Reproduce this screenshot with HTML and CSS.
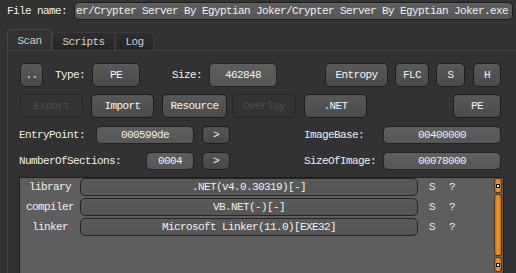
FILE: index.html
```html
<!DOCTYPE html>
<html>
<head>
<meta charset="utf-8">
<link rel="stylesheet" href="styles.css">
</head>
<body>
<div class="file-row">
  <span class="file-label">File name:</span>
  <div class="file-field"><span class="file-text">er/Crypter Server By Egyptian Joker/Crypter Server By Egyptian Joker.exe</span></div>
</div>
<div class="tabs">
  <div class="tab active w-scan">Scan</div>
  <div class="tab w-scripts">Scripts</div>
  <div class="tab w-log">Log</div>
</div>
<div class="pane">
  <div class="row r1">
    <div class="btn w-dots">..</div>
    <span class="lbl l-type">Type:</span>
    <div class="btn w-pe">PE</div>
    <span class="lbl l-size">Size:</span>
    <div class="field w-size">462848</div>
    <div class="btn w-entropy">Entropy</div>
    <div class="btn w-flc">FLC</div>
    <div class="btn w-s">S</div>
    <div class="btn w-h">H</div>
  </div>
  <div class="row r2">
    <div class="btn disabled w-export">Export</div>
    <div class="btn w-import">Import</div>
    <div class="btn w-resource">Resource</div>
    <div class="btn disabled w-overlay">Overlay</div>
    <div class="btn w-net">.NET</div>
    <div class="btn w-pe2">PE</div>
  </div>
  <div class="row r3">
    <span class="lbl l-ep">EntryPoint:</span>
    <div class="field w-ep">000599de</div>
    <div class="btn small w-arrow">&gt;</div>
    <span class="lbl l-right">ImageBase:</span>
    <div class="field w-right">00400000</div>
  </div>
  <div class="row r3">
    <span class="lbl l-nos">NumberOfSections:</span>
    <div class="field w-nos">0004</div>
    <div class="btn small w-arrow">&gt;</div>
    <span class="lbl l-right">SizeOfImage:</span>
    <div class="field w-right">00078000</div>
  </div>
  <div class="list">
    <div class="list-rows">
      <div class="lrow">
        <span class="ltype">library</span>
        <div class="lval">.NET(v4.0.30319)[-]</div>
        <span class="lflag">S</span>
        <span class="lq">?</span>
      </div>
      <div class="lrow">
        <span class="ltype">compiler</span>
        <div class="lval">VB.NET(-)[-]</div>
        <span class="lflag">S</span>
        <span class="lq">?</span>
      </div>
      <div class="lrow">
        <span class="ltype">linker</span>
        <div class="lval">Microsoft Linker(11.0)[EXE32]</div>
        <span class="lflag">S</span>
        <span class="lq">?</span>
      </div>
    </div>
    <div class="scrollbar">
      <div class="sb-btn"><span class="sb-dot"></span></div>
      <div class="sb-thumb"></div>
      <div class="sb-btn"><span class="sb-dot"></span></div>
    </div>
  </div>
</div>
</body>
</html>
```
FILE: styles.css
```css
* { box-sizing: border-box; }
html, body {
  margin: 0;
  padding: 0;
}
body {
  width: 516px;
  height: 273px;
  overflow: hidden;
  background: #323232;
  color: #f0f0f0;
  font-family: "Liberation Mono", "DejaVu Sans Mono", monospace;
  font-size: 11px;
  letter-spacing: -0.6px;
}

.file-row {
  display: flex;
  align-items: center;
  height: 18px;
  margin-top: 2px;
  padding-left: 7px;
  padding-right: 3px;
}
.file-label { width: 67px; white-space: nowrap; }
.file-field {
  flex: 1;
  height: 18px;
  border: 1px solid #1c1c1c;
  background: linear-gradient(#5f5f5f, #555555);
  border-radius: 5px;
  display: flex;
  justify-content: flex-end;
  align-items: center;
  overflow: hidden;
  padding-right: 4px;
}
.file-text { white-space: nowrap; flex: none; }

.tabs {
  display: flex;
  align-items: flex-end;
  margin-top: 9px;
  margin-left: 7px;
  height: 21px;
}
.tab {
  height: 18px;
  border: 1px solid #3b3b3b;
  border-bottom: none;
  background: linear-gradient(#2f2f2f, #242424);
  display: flex;
  align-items: center;
  justify-content: center;
  color: #d0d0d0;
}
.tab.active {
  height: 21px;
  background: #333333;
  border-color: #474747;
  border-top-left-radius: 4px;
  border-top-right-radius: 4px;
  padding-top: 2px;
}
.w-scan { width: 45px; }
.w-scripts { width: 63px; }
.w-log { width: 39px; }

.pane {
  margin-left: 7px;
  height: 223px;
  border-top: 1px solid #434343;
  border-left: 1px solid #434343;
  padding: 12px 0 0 12px;
}

.row { display: flex; align-items: center; }
.r1 { height: 24px; }
.r2 { height: 24px; margin-top: 7px; }
.r3 { height: 18px; margin-top: 8px; margin-left: -1px; }

.btn {
  height: 24px;
  border: 1px solid #1e1e1e;
  border-radius: 5px;
  background: linear-gradient(#595959, #4a4a4a);
  display: flex;
  align-items: center;
  justify-content: center;
  white-space: nowrap;
  color: #f4f4f4;
  flex: none;
}
.btn.small { height: 18px; background: linear-gradient(#545454, #474747); }
.btn.disabled {
  background: #333333;
  border-color: #262626;
  color: #4d4d4d;
}
.field {
  height: 18px;
  border: 1px solid #232323;
  border-radius: 5px;
  background: linear-gradient(#5e5e5e, #565656);
  display: flex;
  align-items: center;
  justify-content: center;
  flex: none;
}
.r1 .field { height: 24px; }
.lbl { white-space: nowrap; flex: none; }

.w-dots { width: 23px; }
.l-type { margin-left: 12px; width: 37px; }
.w-pe { width: 48px; }
.l-size { margin-left: 32px; width: 37px; }
.w-size { width: 68px; }
.w-entropy { margin-left: 48px; width: 63px; }
.w-flc { margin-left: 7px; width: 34px; }
.w-s { margin-left: 7px; width: 29px; }
.w-h { margin-left: 8px; width: 28px; }

.w-export { width: 63px; }
.w-import { margin-left: 8px; width: 63px; }
.w-resource { margin-left: 8px; width: 65px; }
.w-overlay { margin-left: 5px; width: 64px; }
.w-net { margin-left: 8px; width: 63px; }
.w-pe2 { margin-left: 86px; width: 48px; }

.l-ep { width: 77px; }
.w-ep { width: 98px; }
.l-nos { width: 127px; }
.w-nos { width: 48px; }
.w-arrow { margin-left: 8px; width: 28px; }
.l-right { margin-left: 74px; width: 79px; }
.w-right { width: 118px; }

.list {
  margin-top: 7px;
  margin-left: -1px;
  width: 485px;
  height: 100px;
  border: 1px solid #1e1e1e;
  background: #5e5e5e;
  display: flex;
}
.list-rows {
  flex: 1;
  display: flex;
  flex-direction: column;
  gap: 2px;
}
.lrow {
  display: flex;
  align-items: center;
  height: 18px;
}
.ltype { width: 60px; text-align: center; flex: none; }
.lval {
  width: 338px;
  height: 18px;
  border: 1px solid #252525;
  border-radius: 5px;
  background: linear-gradient(#5a5a5a, #555555);
  display: flex;
  align-items: center;
  justify-content: center;
  flex: none;
  white-space: nowrap;
}
.lflag { margin-left: 11px; width: 6px; }
.lq { margin-left: 14px; width: 6px; }

.scrollbar {
  width: 8px;
  margin-right: 1px;
  display: flex;
  flex-direction: column;
  gap: 1px;
}
.sb-btn, .sb-thumb {
  border: 1px solid #5a3408;
  border-radius: 3px;
  background: linear-gradient(90deg, #c8700e, #f29a2a 50%, #c8700e);
  display: flex;
  align-items: center;
  justify-content: center;
}
.sb-btn { height: 15px; }
.sb-thumb { height: 62px; }
.sb-dot {
  width: 4px;
  height: 4px;
  background: #ffffff;
  border: 1px solid #000000;
}
```
